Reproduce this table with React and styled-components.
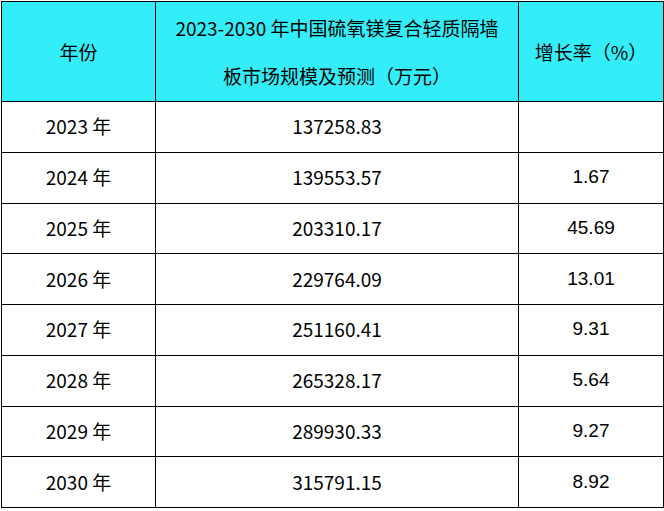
import React from 'react';
import styled, { createGlobalStyle } from 'styled-components';

const GlobalStyle = createGlobalStyle`
  html, body {
    margin: 0;
    padding: 0;
    background: #ffffff;
  }
`;

const Page = styled.div`
  padding: 1px 0 0 1px;
`;

const Table = styled.table`
  border-collapse: collapse;
  table-layout: fixed;
  width: 662px;
  color: #000;
  font-family: "Noto Sans CJK SC", "Microsoft YaHei", sans-serif;
  font-size: 19px;
`;

const HeadRow = styled.tr`
  height: 100px;
  background: #33eef9;
`;

const Row = styled.tr`
  height: 50.75px;
`;

const Cell = styled.td`
  border: 1px solid #000;
  padding: 0;
  text-align: center;
  vertical-align: middle;
  line-height: 1.2;
  font-family: ${p => p.latin ? '"Liberation Sans", Arial, sans-serif' : 'inherit'};
`;

const HeadCell = styled(Cell)`
  line-height: 48px;
`;

const rows = [
  ['2023', '137258.83', ''],
  ['2024', '139553.57', '1.67'],
  ['2025', '203310.17', '45.69'],
  ['2026', '229764.09', '13.01'],
  ['2027', '251160.41', '9.31'],
  ['2028', '265328.17', '5.64'],
  ['2029', '289930.33', '9.27'],
  ['2030', '315791.15', '8.92'],
];

export default function App() {
  return (
    <Page>
      <GlobalStyle />
      <Table>
        <colgroup>
          <col style={{ width: 154 }} />
          <col style={{ width: 363 }} />
          <col style={{ width: 145 }} />
        </colgroup>
        <tbody>
          <HeadRow>
            <HeadCell>年份</HeadCell>
            <HeadCell>
              2023-2030 年中国硫氧镁复合轻质隔墙
              <br />
              板市场规模及预测（万元）
            </HeadCell>
            <HeadCell>增长率（%）</HeadCell>
          </HeadRow>
          {rows.map(([year, value, rate]) => (
            <Row key={year}>
              <Cell>{year} 年</Cell>
              <Cell>{value}</Cell>
              <Cell latin>{rate}</Cell>
            </Row>
          ))}
        </tbody>
      </Table>
    </Page>
  );
}
